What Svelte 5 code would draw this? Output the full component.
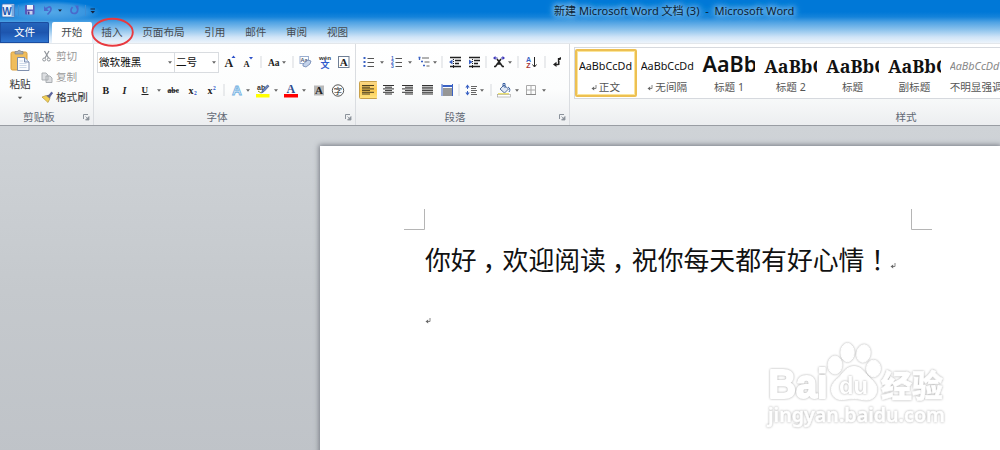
<script>
  const tabs = ['插入', '页面布局', '引用', '邮件', '审阅', '视图'];
  const widths = { sep: 2, arrow: 6 };
  // [icon, space before it]
  const fontTop = [['grow', 1], ['shrink', 1], ['sep', 3], ['case', 3], ['arrow', -2], ['sep', 5], ['clear', 2], ['phonetic', 2], ['boxed', 1]];
  const fontBottom = [['bold', 3], ['italic', 1], ['under', 2], ['arrow', 2], ['strike', 2], ['sub', 2], ['sup', 1], ['sep', 2], ['effect', 3], ['arrow', -1], ['mark', 3], ['arrow', 1], ['color', 3], ['arrow', 1], ['shade', 3], ['circled', 1]];
  const paraTop = [['bullets', 4], ['arrow', 1], ['numbers', 3], ['arrow', 1], ['levels', 3], ['arrow', -2], ['sep', 3], ['outdent', 3], ['indent', 1], ['sep', 2], ['asian', 3], ['arrow', -1], ['sep', 4], ['sort', 3], ['sep', 4], ['pilcrow', 2]];
  const paraBottom = [['left', 3], ['center', 2], ['right', 1], ['justify', 2], ['spread', 2], ['sep', 2], ['spacing', 2], ['arrow', -1], ['sep', 5], ['fill', 3], ['arrow', 1], ['border', 2], ['arrow', 1]];
  const styles = [
    { name: '正文', kind: 'plain', ret: true, active: true },
    { name: '无间隔', kind: 'plain', ret: true },
    { name: '标题 1', kind: 'h1' },
    { name: '标题 2', kind: 'serif' },
    { name: '标题', kind: 'serif' },
    { name: '副标题', kind: 'serif' },
    { name: '不明显强调', kind: 'em' }
  ];
  const samples = { plain: 'AaBbCcDd', h1: 'AaBb', serif: 'AaBbC', em: 'AaBbCcDd' };
  const lines = {
    left: [[3, 12], [3, 8], [3, 12], [3, 8], [3, 12], [3, 8]],
    center: [[4, 11], [6, 7], [4, 11], [6, 7], [4, 11], [6, 7]],
    right: [[4, 11], [7, 8], [4, 11], [7, 8], [4, 11], [7, 8]],
    justify: [[4, 11], [4, 11], [4, 11], [4, 11], [4, 11], [4, 11]]
  };
</script>

{#snippet icon(n)}
  {#if n === 'sep'}
    <svg width="2" height="18"><path d="M1 3v12" stroke="#d6d9dd" /></svg>
  {:else if n === 'arrow'}
    <svg width="6" height="18"><path d="M1 8.200h4L3 10.700z" fill="#666" /></svg>
  {:else}
    <svg width="18" height="18" viewBox="0 0 18 18" class="ic">
      {#if n === 'grow'}
        <text x="4.500" y="13.500" class="s" font-size="12">A</text><path d="M11.500 5l2-2.400L15.500 5z" fill="#2b50c8" />
      {:else if n === 'shrink'}
        <text x="4.500" y="13.500" class="s" font-size="8.500">A</text><path d="M10 4h4l-2 2.400z" fill="#2b50c8" />
      {:else if n === 'case'}
        <text x="3" y="12.500" class="s" font-size="9.500">Aa</text>
      {:else if n === 'clear'}
        <text x="4.500" y="8.500" font-size="5.500" font-family="Liberation Sans" font-weight="700" fill="#53627c">Aa</text>
        <rect x="4" y="3.500" width="8.500" height="7" fill="none" stroke="#9aaed0" />
        <path d="M7 11l5-4 3 1-1 3-4 3-3-1z" fill="#c4d3ea" stroke="#6c84b0" stroke-width=".8" />
      {:else if n === 'phonetic'}
        <text x="3" y="7" font-size="6" font-family="Liberation Sans" font-weight="700" fill="#333" textLength="12" lengthAdjust="spacingAndGlyphs">wén</text>
        <text x="4.500" y="14.800" font-size="9" font-weight="700" fill="#315bcc">文</text>
      {:else if n === 'boxed'}
        <rect x="3.500" y="3.500" width="10.500" height="11" fill="#fff" stroke="#6f7f95" /><text x="4.700" y="13" class="s" font-size="11">A</text>
      {:else if n === 'bold'}
        <text x="5.500" y="12.500" class="s" font-size="10">B</text>
      {:else if n === 'italic'}
        <text x="6.500" y="12.500" class="s" font-size="10" font-style="italic">I</text>
      {:else if n === 'under'}
        <text x="5.500" y="11.500" class="s" font-size="9">U</text><path d="M5.500 13.500h7" stroke="#222" />
      {:else if n === 'strike'}
        <text x="3.500" y="12" class="s" font-size="7.500" textLength="11.500">abc</text><path d="M3.500 9.800h11.500" stroke="#222" stroke-width=".9" />
      {:else if n === 'sub' || n === 'sup'}
        <text x="4.500" y="12.500" class="s" font-size="10">x</text>
        <text x="10" y={n === 'sub' ? 14 : 8.5} class="s b" font-size="5.500">2</text>
      {:else if n === 'effect'}
        <text x="4" y="14" font-family="Liberation Sans" font-size="13.500" font-weight="700" fill="#fff" stroke="#74b2e2" stroke-width=".9">A</text>
      {:else if n === 'mark'}
        <text x="3" y="8.500" font-size="7" font-family="Liberation Sans" font-weight="700" fill="#333">ab</text>
        <path d="M7.500 12l1-3 5-5 1.500 1.200-5 5.300z" fill="#6b89c6" stroke="#374e80" stroke-width=".7" />
        <path d="M4 10l3 2" stroke="#8c8b20" /><rect x="2" y="13" width="13.500" height="3.500" fill="#ff0" />
      {:else if n === 'color'}
        <text x="4.500" y="11.500" font-family="Liberation Serif" font-size="12" font-weight="700" fill="#2f4c8e">A</text><rect x="2" y="13" width="14" height="3.500" fill="#f00" />
      {:else if n === 'shade'}
        <rect x="4" y="4.500" width="10" height="10" fill="#b9b9b9" /><text x="5" y="13" class="s" font-size="11">A</text>
      {:else if n === 'circled'}
        <circle cx="9" cy="9.500" r="5.700" fill="none" stroke="#444" stroke-width=".9" /><text x="4.800" y="12.800" font-size="8.400" fill="#222">字</text>
      {:else if n === 'bullets' || n === 'numbers'}
        {#each [5, 9, 13] as y, i}
          {#if n === 'bullets'}
            <rect x="3.500" y={y - 1} width="2" height="2" fill="#3a62c4" />
          {:else}
            <text x="3" y={y + 1.8} font-size="5" font-weight="700" font-family="Liberation Sans" fill="#3a62c4">{i + 1}</text>
          {/if}
          <path d={`M7.500 ${y + 0.5}h6.500`} stroke="#555" />
        {/each}
      {:else if n === 'levels'}
        <path d="M2.500 4.500h2M5 8.500h2M7 12.500h2M3.500 4v3" stroke="#3a62c4" stroke-width="1.300" /><path d="M6 5h7M8.500 9h5M10.500 13h3" stroke="#666" />
      {:else if n === 'outdent' || n === 'indent'}
        <path d="M4 4.500h11M9 7.500h6M9 10.500h4M4 13.500h11" stroke="#222" stroke-width="1.300" /><path d="M7.500 4v11" stroke="#222" stroke-dasharray="1 1" />
        {#if n === 'outdent'}<path d="M3 9l3.500-2.500v5z" fill="#3a62c4" />{:else}<path d="M7.500 9L4 6.500v5z" fill="#3a62c4" />{/if}
      {:else if n === 'asian'}
        <path d="M4 13.500h1.500L11 6M14 13.500h-1.500L7 6M6.500 11h5" stroke="#222" stroke-width="1.600" fill="none" /><path d="M3 5l2.500-2v4zM15 5l-2.500-2v4z" fill="#3b35b8" /><path d="M5 5h2.500M11 5h2.500" stroke="#3b35b8" />
      {:else if n === 'sort'}
        <text x="4" y="8.500" font-size="7" font-family="Liberation Sans" font-weight="700" fill="#3a62c4">A</text>
        <text x="4.300" y="15" font-size="7" font-family="Liberation Sans" font-weight="700" fill="#a33">Z</text>
        <path d="M12.500 4v9.500M10.500 11.500l2 2.500 2-2.500" fill="none" stroke="#222" />
      {:else if n === 'pilcrow'}
        <path d="M10.500 5v4.500M10.500 11.500H8" stroke="#222" stroke-width="1.300" /><path d="M10 5.500l3-1.500v2.500l-2.500 1zM10 8h1.500v4H10zM8.500 8.800v5.200L5 11.400z" fill="#222" />
      {:else if lines[n]}
        {#if n === 'left'}<rect x=".5" y=".5" width="18" height="17" rx="1" fill="url(#gold)" stroke="#c9a14a" />{/if}
        {#each lines[n] as [x, w], i}<rect {x} y={4 + i * 1.7} width={w} height="1" fill={n === 'left' ? '#4d4020' : '#333'} />{/each}
      {:else if n === 'spread'}
        <path d="M4 3v12M14.500 3v12" stroke="#3a62c4" /><path d="M4.500 5h10" stroke="#3a62c4" stroke-width="2" />
        <path d="M5 8h9M5 10h9M5 12h9M5 14h9" stroke="#333" stroke-width="1.200" />
      {:else if n === 'spacing'}
        <path d="M5.500 4v10" stroke="#3a62c4" stroke-dasharray="4 2" /><path d="M3.300 6.500l2.200-3 2.200 3zM3.300 11.500l2.200 3 2.200-3z" fill="#3a62c4" /><path d="M9 5.500h6M9 7.500h5M9 9.500h6M9 11.500h5M9 13.500h6" stroke="#555" stroke-width=".9" />
      {:else if n === 'fill'}
        <path d="M5 8l4-4 4.500 4-4 4z" fill="#dfe8f6" stroke="#44618f" stroke-width=".9" /><path d="M8 6V2.500h2V7M13 6c2 1 2.500 3 1 5" fill="none" stroke="#3a62a4" />
        <rect x="2.500" y="13.500" width="13" height="2.500" fill="#fff" stroke="#999" stroke-width=".6" /><path d="M3 12.800h11" stroke="#e6d83c" />
      {:else if n === 'border'}
        <path d="M4.500 4.500h9v9h-9zM9 4.500v9M4.500 9h9" fill="none" stroke="#aaa" /><path d="M4 13.500h10" stroke="#888" />
      {/if}
    </svg>
  {/if}
{/snippet}

{#snippet tools(list)}
  {#each list as [n, gap]}
    <span class="tool" style={`margin-left:${gap}px;width:${widths[n] ?? 18}px`}>{@render icon(n)}</span>
  {/each}
{/snippet}

{#snippet launcher()}
  <svg class="launch" width="8" height="8"><path d="M1.500 6V1.500H6" fill="none" stroke="#8b929b" /><path d="M3.500 3.500L6 6M7 3.500V7H3.500z" stroke="#8b929b" fill="#8b929b" stroke-width=".8" /></svg>
{/snippet}

{#snippet ret()}
  <svg class="ret" width="6" height="7"><path d="M5 1v3.500H2" fill="none" stroke="#777" stroke-width=".9" /><path d="M3.200 2.500v4L.5 4.500z" fill="#666" /></svg>
{/snippet}

<div class="app">
  <svg width="0" height="0" class="defs"><defs><linearGradient id="gold" x2="0" y2="1"><stop stop-color="#fbd98a" /><stop offset=".5" stop-color="#fbc94f" /><stop offset="1" stop-color="#ffe582" /></linearGradient></defs></svg>
  <header>
    <div class="titlebar">
      <svg class="quick" width="100" height="20">
        <rect x="2" y="3" width="12.500" height="13" rx="1" fill="#e9f2fc" stroke="#3a6fb8" stroke-width=".8" />
        <rect x="11.500" y="4" width="2.500" height="11" fill="#79a7de" />
        <text x="2.300" y="13.500" font-family="Liberation Sans" font-size="10" font-weight="700" fill="#1b58ae">W</text>
        <path d="M18.500 4v11M85.500 4v11" stroke="#3c8dd5" />
        <rect x="25" y="4" width="9.500" height="9.500" rx="1" fill="#5957b8" /><rect x="27" y="4" width="6" height="4.500" fill="#eef1fa" /><rect x="27.500" y="10" width="5" height="3.500" fill="#c9d2ee" /><rect x="28" y="10.500" width="1.500" height="3" fill="#3c3a90" />
        <path d="M45.500 9c2-4 5-3.500 5.500-1.500S49 12 47.500 13.500" fill="none" stroke="#4a69cb" stroke-width="1.700" /><path d="M44 5v5h5z" fill="#4a69cb" />
        <path d="M58 8.500h4l-2 2.200zM90.500 10h4.500l-2.200 2.500z" fill="#15223c" /><path d="M90.500 8h4.500" stroke="#15223c" />
        <path d="M72.500 6c-2.500 2.500-2 6.500 1.500 6.500s5-4 2.500-6.500" fill="none" stroke="#4a69cb" stroke-width="1.700" /><path d="M74.500 4.500h4v4z" fill="#4a69cb" />
      </svg>
      <span class="title">新建 Microsoft Word 文档 (3)&nbsp; -&nbsp; Microsoft Word</span>
    </div>
    <nav>
      <span class="file">文件</span>
      <span class="tab on">开始</span>
      {#each tabs as t}<span class="tab">{t}</span>{/each}
    </nav>
    <svg class="ring" width="44" height="30"><ellipse cx="22.500" cy="15.300" rx="20.300" ry="13.500" fill="none" stroke="#e8393f" stroke-width="1.900" /></svg>
  </header>

  <section class="ribbon">
    <div class="group clip">
      <div class="body clipbody">
        <div class="paste">
          <svg width="22" height="24">
            <rect x="2" y="3" width="16" height="18" rx="1.500" fill="#f0bd5c" stroke="#d79d3c" />
            <path d="M6 5V2.500h2.500a1.800 1.800 0 0 1 3.400 0H14V5z" fill="#a9adb3" stroke="#80858c" stroke-width=".7" />
            <path d="M8.500 8.500h7l4.500 4.500v8.500H8.500z" fill="#fbfcff" stroke="#7285a8" stroke-width=".9" />
            <path d="M15.500 8.500V13H20" fill="#dce5f4" stroke="#7285a8" stroke-width=".9" /><path d="M10.500 12h3.500M10.500 14.500h7M10.500 16.500h7M10.500 18.500h7" stroke="#c3cfe3" stroke-width=".8" />
          </svg>
          <span>粘贴</span>
          <svg width="6" height="4"><path d="M.8 .8h4.400L3 3.300z" fill="#555" /></svg>
        </div>
        <div class="cmds">
          <span class="off"><svg width="12" height="12"><path d="M3.500 1l4 7M8 1L4 8" stroke="#8f949a" stroke-width="1.200" /><circle cx="3.200" cy="9.500" r="1.500" fill="none" stroke="#8f949a" /><circle cx="7.800" cy="9.500" r="1.500" fill="none" stroke="#8f949a" /></svg>剪切</span>
          <span class="off"><svg width="12" height="12"><path d="M1 2h4l2 2v5H1zM5 5h4l2 2v4.500H5z" fill="#dcdee1" stroke="#a4a8ad" stroke-width=".9" /></svg>复制</span>
          <span><svg width="12" height="12"><path d="M7.500 4.500l3-3.500 1.200 1-2.700 3.700z" fill="#5964a8" stroke="#3a437b" stroke-width=".5" /><path d="M1 6l4-1.500 4 3L7 11.500z" fill="#f0cf56" stroke="#ad8b2d" stroke-width=".6" /><path d="M5 4.500l2.500-.8 2 1.800L9 7.500z" fill="#6b6b80" /></svg>格式刷</span>
        </div>
      </div>
      <footer><span>剪贴板</span>{@render launcher()}</footer>
    </div>

    <div class="group font">
      <div class="body">
        <div class="row">
          <div class="combos"><span class="cb fam">微软雅黑{@render icon('arrow')}</span><span class="cb size">二号{@render icon('arrow')}</span></div>
          {@render tools(fontTop)}
        </div>
        <div class="row second">{@render tools(fontBottom)}</div>
      </div>
      <footer><span>字体</span>{@render launcher()}</footer>
    </div>

    <div class="group para">
      <div class="body">
        <div class="row">{@render tools(paraTop)}</div>
        <div class="row second">{@render tools(paraBottom)}</div>
      </div>
      <footer><span>段落</span>{@render launcher()}</footer>
    </div>

    <div class="group styles">
      <div class="body">
        <div class="gallery">
          {#each styles as s}
            <div class="style" class:active={s.active}>
              <div class={`sample ${s.kind}`}>{samples[s.kind]}</div>
              <div class="name">{#if s.ret}{@render ret()}{/if}{s.name}</div>
            </div>
          {/each}
        </div>
      </div>
      <footer><span>样式</span></footer>
    </div>
  </section>

  <main>
    <article>
      <div class="corners">
        <svg width="22" height="22"><path d="M20.500 0v20.500H0" fill="none" stroke="#b5b5b5" /></svg>
        <svg width="22" height="22"><path d="M1.500 0v20.500H22" fill="none" stroke="#b5b5b5" /></svg>
      </div>
      <p class="line">你好<span class="pt">，</span>欢迎阅读<span class="pt">，</span>祝你每天都有好心情<span class="ex">！</span>{@render ret()}</p>
      <p class="blank">{@render ret()}</p>
      <svg class="wm" width="190" height="92" viewBox="762 340 190 92">
        <g fill="#fff" stroke="#fff" stroke-linejoin="round">
          <text class="glow" x="768.500" y="398" font-family="Liberation Sans" font-weight="700" font-size="40" stroke-width="2" textLength="59" lengthAdjust="spacingAndGlyphs">Bai</text>
          <g class="glow">
            <ellipse cx="835" cy="365" rx="7" ry="9" /><ellipse cx="847.500" cy="352.500" rx="6.700" ry="9.200" /><ellipse cx="863.500" cy="353.500" rx="6.700" ry="8.800" transform="rotate(12 863.500 353.500)" /><ellipse cx="873.500" cy="368.500" rx="7" ry="8.300" />
            <path d="M854 366.500c-8 0-11 7-15 11-5 4-8 8-7.500 13 .5 6 5 9.500 11 9 4-.3 8-1 12-1s8 1.500 12 1.500c6 0 10-4 10.300-10 .2-6-4-9-8-13-4-4-7-10.500-14.800-10.500z" />
          </g>
          <text class="glow" x="839" y="394" font-family="Liberation Sans" font-weight="700" font-size="24" stroke="none" textLength="29" lengthAdjust="spacingAndGlyphs">du</text>
          <text class="glow" x="881" y="396.500" font-weight="900" font-size="31" stroke-width=".6" textLength="62">经验</text>
          <text class="glow" x="768" y="422" font-family="Noto Sans" font-weight="600" font-size="20" stroke-width=".5" textLength="177" lengthAdjust="spacingAndGlyphs">jingyan.baidu.com</text>
        </g>
      </svg>
    </article>
  </main>
</div>

<style>
  :global(body) { margin: 0; overflow: hidden; }
  .app { width: 1000px; height: 450px; overflow: hidden; display: flex; flex-direction: column; font: 10.600px/14px "Noto Sans", "Noto Sans CJK SC", sans-serif; color: #333; }
  .app :global(svg) { display: block; flex: none; font-family: "Noto Sans CJK SC", sans-serif; }
  .defs { position: absolute; }
  header { position: relative; height: 43px; flex: none; background: linear-gradient(#0078d7 0 12px, #1583da 17px, #4da1e3 22px, #8fc4ed 30px, #cfe4f7 37px, #edf4fb 43px); }
  .titlebar { height: 22px; display: flex; align-items: center; }
  .quick { background: radial-gradient(ellipse at 50% 55%, #55a9e8 0, #3996e0 50%, transparent 72%); }
  .title { margin-left: 454px; font-size: 11.050px; color: #0b1d33; white-space: pre; text-shadow: 0 0 6px #a8d4f4, 0 0 6px #a8d4f4, 0 0 9px #a8d4f4; }
  nav { display: flex; height: 21px; }
  nav span { line-height: 21px; }
  .file { width: 49px; margin-right: 3px; text-align: center; color: #fff; background: linear-gradient(#2566bd, #1d55ae 50%, #2f78d4); box-shadow: inset 0 0 0 1px #1b4da0; border-radius: 0 2px 0 0; }
  .tab { padding: 0 9.850px; color: #454a50; }
  .on { width: 39.500px; padding: 0; text-align: center; background: #fff; border-radius: 2px 2px 0 0; }
  .ring { position: absolute; left: 90px; top: 17px; z-index: 2; }
  .ribbon { height: 81px; flex: none; display: flex; background: linear-gradient(#fff, #fcfdfd 55%, #eceef0); border-top: 1px solid #e3e7eb; border-bottom: 1px solid #999da3; }
  .group { display: flex; flex-direction: column; border-right: 1px solid #dadde1; box-sizing: border-box; flex: none; }
  .body { height: 65px; }
  footer { height: 16px; display: flex; align-items: center; color: #626975; }
  footer span { flex: 1; text-align: center; }
  .launch { margin-right: 3px; }
  .clip { width: 94px; }
  .clip footer span { padding-right: 4px; }
  .font { width: 262px; }
  .font footer span { padding-right: 4px; }
  .para { width: 214px; }
  .para footer span { padding-right: 4px; }
  .styles { width: 672px; border: 0; }
  .clipbody { display: flex; }
  .paste { width: 40px; display: flex; flex-direction: column; align-items: center; padding-top: 5px; box-sizing: border-box; }
  .paste span { margin: 4px 0 5px; }
  .cmds { padding: 2px 0 0 1px; display: flex; flex-direction: column; }
  .cmds span { height: 20.500px; display: flex; align-items: center; gap: 3px; white-space: nowrap; }
  .cmds .off { color: #999; }
  .row { display: flex; align-items: center; height: 22px; padding-top: 7px; }
  .second { padding-top: 6px; }
  .tool { display: flex; flex: none; justify-content: center; }
  .combos { display: flex; margin-left: 3px; width: 122px; height: 21px; box-sizing: border-box; border: 1px solid #d9dce0; background: #fff; }
  .cb { display: flex; justify-content: space-between; align-items: center; padding: 0 1px; color: #111; }
  .fam { width: 74px; border-right: 1px solid #d9dce0; }
  .size { flex: 1; }
  .s { font-family: "Liberation Serif"; font-weight: 700; fill: #222; }
  .b { fill: #2b50c8; }
  .gallery { display: flex; margin: 3px 0 0 4px; height: 52px; box-sizing: border-box; border: 1px solid #d6d9de; background: #fff; padding-top: 1px; }
  .style { width: 61.800px; height: 48px; box-sizing: border-box; border: 2px solid transparent; flex: none; display: flex; flex-direction: column; align-items: center; }
  .active { border-color: #edc052; box-shadow: inset 0 0 0 1px #fbe59b; border-radius: 2px; }
  .sample { width: 53px; height: 30px; line-height: 30px; overflow: hidden; white-space: nowrap; color: #111; margin-left: -1px; }
  .plain { font-size: 10.800px; }
  .h1 { font-size: 21.500px; line-height: 26px; font-weight: 600; }
  .serif { font: 700 18px/31px "Noto Serif", "Liberation Serif", serif; }
  .em { font-size: 10.800px; font-style: italic; color: #888; }
  .name { display: flex; align-items: center; gap: 2px; height: 14px; margin: -1px 0 0 -1px; white-space: nowrap; color: #555; }
  main { flex: 1; background: linear-gradient(#cfd3d7, #c5c9cd 50%, #bfc3c8); padding: 20px 0 0 320px; }
  article { position: relative; height: 310px; background: #fff; box-shadow: 0 0 5px 1px #777b84; }
  .corners { display: flex; justify-content: space-between; padding: 63px 68px 0 84px; }
  p { margin: 0; display: flex; align-items: center; color: #111; font-family: "Noto Sans CJK SC", sans-serif; }
  .line { padding: 10px 0 0 105px; height: 36px; font-size: 25.850px; }
  .pt, .ex { font-family: "Noto Sans CJK TC", sans-serif; }
  .pt { position: relative; top: 8px; left: -1px; }
  .line :global(.ret) { margin: 12px 0 0 0; }
  .blank { padding: 31px 0 0 105px; height: 24px; }
  .wm { position: absolute; left: 442px; top: 194px; }
  .glow { filter: drop-shadow(0 0 .8px #aaa); }
</style>
